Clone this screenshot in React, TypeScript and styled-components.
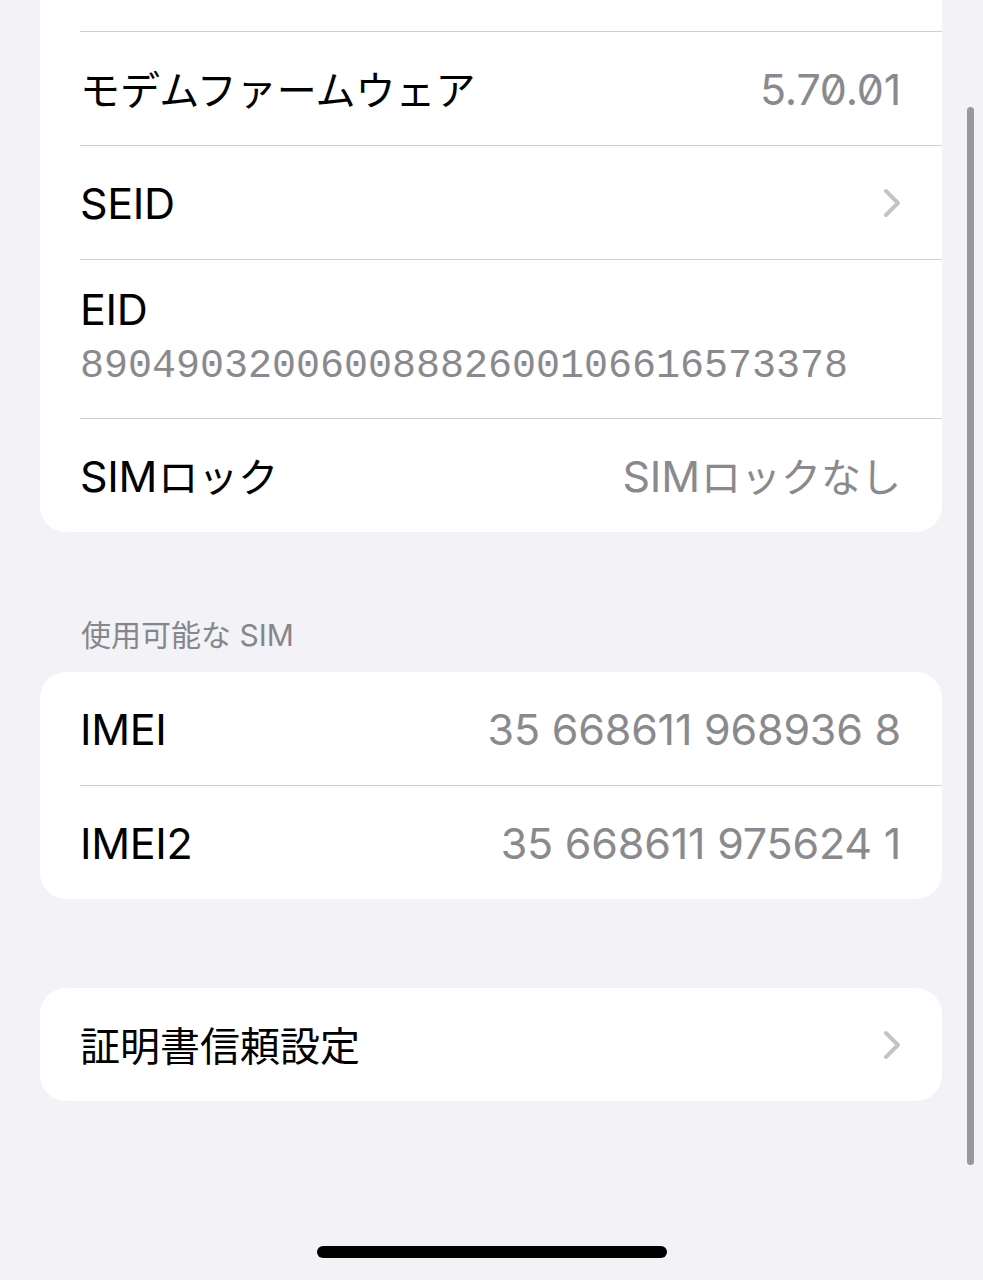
import * as React from "react";
import styled, { createGlobalStyle } from "styled-components";

const GlobalStyle = createGlobalStyle`
  html, body {
    margin: 0;
    padding: 0;
    background: #f2f2f7;
  }
  body {
    font-family: "Inter", "Noto Sans CJK JP", sans-serif;
    -webkit-font-smoothing: antialiased;
  }
`;

const Page = styled.div`
  position: relative;
  min-height: 1280px;
  box-sizing: border-box;
  background: #f2f2f7;
  padding: 0 41px 22px 40px;
  display: flex;
  flex-direction: column;
`;

const Card = styled.section<{ $cutTop?: boolean; $gap?: number }>`
  background: #ffffff;
  border-radius: ${(p) => (p.$cutTop ? "0 0 26px 26px" : "26px")};
  margin-top: ${(p) => p.$gap ?? 0}px;
  overflow: hidden;
`;

const Row = styled.div`
  display: flex;
  align-items: center;
  justify-content: space-between;
  min-height: 113px;
  margin-left: 40px;
  padding-right: 41px;
  font-size: 43px;
  line-height: 50px;
  color: #000;

  & + & {
    border-top: 1px solid #cfcfd3;
  }
`;

const Stub = styled(Row)`
  min-height: 31px;
`;

const StackRow = styled(Row)`
  flex-direction: column;
  align-items: flex-start;
  justify-content: flex-start;
  gap: 8px;
  padding-top: 24px;
  padding-bottom: 26px;
  min-height: 0;
`;

const Label = styled.span`
  letter-spacing: -0.3px;
`;

const Value = styled.span`
  color: #8a8a8e;
  font-feature-settings: "zero";
  letter-spacing: -0.2px;
`;

// Japanese run inside a Latin label; $afterLatin adds the small gap iOS puts after "SIM"
const Jp = styled.span<{ $afterLatin?: boolean }>`
  font-family: "Noto Sans CJK JP", sans-serif;
  font-size: 0.93em;
  letter-spacing: 0;
  margin-left: ${(p) => (p.$afterLatin ? "0.03em" : "0")};
`;

const Mono = styled.span`
  font-family: "Liberation Mono", "DejaVu Sans Mono", monospace;
  font-size: 40px;
  color: #8a8a8e;
`;

const SectionHeader = styled.div`
  margin: 83px 0 17px 41px;
  font-size: 30px;
  line-height: 40px;
  color: #86868b;
`;

const HomeIndicator = styled.div`
  align-self: center;
  width: 350px;
  height: 12px;
  margin-top: auto;
  margin-left: 1px;
  border-radius: 6px;
  background: #000;
`;

const ScrollThumb = styled.div`
  position: absolute;
  top: 107px;
  right: 9px;
  width: 7px;
  height: 1058px;
  border-radius: 4px;
  background: #98989d;
`;

const Chevron = () => (
  <svg width="18" height="30" viewBox="0 0 18 30" fill="none">
    <polyline
      points="3,3 15,15 3,27"
      stroke="#c4c4c7"
      strokeWidth="4"
      strokeLinecap="round"
      strokeLinejoin="round"
    />
  </svg>
);

export default function App() {
  return (
    <>
      <GlobalStyle />
      <Page>
        <Card $cutTop>
          <Stub />
          <Row>
            <Label>
              <Jp>モデムファームウェア</Jp>
            </Label>
            <Value>5.70.01</Value>
          </Row>
          <Row>
            <Label>SEID</Label>
            <Chevron />
          </Row>
          <StackRow>
            <Label>EID</Label>
            <Mono>89049032006008882600106616573378</Mono>
          </StackRow>
          <Row>
            <Label>
              SIM<Jp $afterLatin>ロック</Jp>
            </Label>
            <Value>
              SIM<Jp $afterLatin>ロックなし</Jp>
            </Value>
          </Row>
        </Card>

        <SectionHeader>使用可能な SIM</SectionHeader>
        <Card>
          <Row>
            <Label>IMEI</Label>
            <Value>35 668611 968936 8</Value>
          </Row>
          <Row>
            <Label>IMEI2</Label>
            <Value>35 668611 975624 1</Value>
          </Row>
        </Card>

        <Card $gap={89}>
          <Row>
            <Label>
              <Jp>証明書信頼設定</Jp>
            </Label>
            <Chevron />
          </Row>
        </Card>

        <HomeIndicator />
        <ScrollThumb />
      </Page>
    </>
  );
}
